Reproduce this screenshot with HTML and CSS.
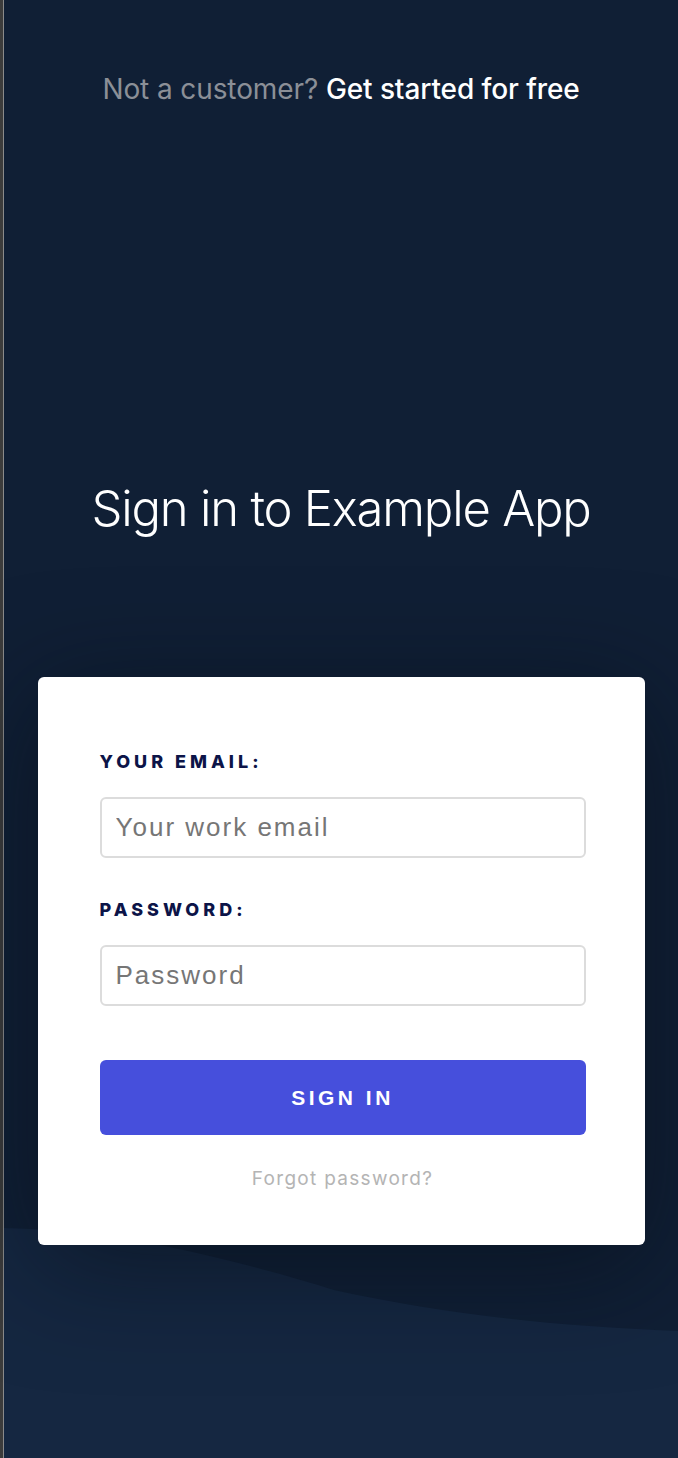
FILE: index.html
```html
<!DOCTYPE html>
<html lang="en">
<head>
<meta charset="utf-8">
<title>Sign in to Example App</title>
<link rel="stylesheet" href="styles.css">
</head>
<body>
<div class="frame">
  <main class="page">
    <p class="signup"><span class="signup-muted">Not a customer?</span> <a class="signup-link" href="#">Get started for free</a></p>
    <h1 class="title">Sign in to Example App</h1>
    <form class="card">
      <label class="field-label" for="email">Your email:</label>
      <input class="field-input" id="email" type="email" placeholder="Your work email">
      <label class="field-label field-label--second" for="password">Password:</label>
      <input class="field-input" id="password" type="password" placeholder="Password">
      <button class="submit" type="button">Sign in</button>
      <a class="forgot" href="#">Forgot password?</a>
    </form>
  </main>
</div>
</body>
</html>
```

FILE: styles.css
```css
html, body {
  margin: 0;
  padding: 0;
}

body {
  background: #101f35;
  font-family: Inter, "Liberation Sans", sans-serif;
}

.frame {
  display: flex;
  min-height: 1458px;
  border-left: 3px solid #3c3c3c;
}

.page {
  flex: 1;
  display: flex;
  flex-direction: column;
  align-items: center;
  padding-top: 71px;
  border-left: 1px solid #8a8a8a;
  background-color: #101f35;
  background-image: url("data:image/svg+xml;utf8,<svg xmlns='http://www.w3.org/2000/svg' viewBox='0 0 674 1458' preserveAspectRatio='none'><path d='M0 1228 C100 1230 200 1250 330 1290 C430 1312 540 1326 674 1331 L674 1458 L0 1458 Z' fill='%23152741'/></svg>");
  background-size: 100% 100%;
  background-repeat: no-repeat;
}

.signup {
  margin: 0;
  font-size: 28px;
  line-height: 36px;
  letter-spacing: -0.1px;
}

.signup-muted {
  color: #8b8f97;
}

.signup-link {
  color: #ffffff;
  text-decoration: none;
  font-weight: 500;
}

.title {
  margin: 372px 0 0;
  font-size: 49px;
  line-height: 60px;
  font-weight: 300;
  color: #ffffff;
  letter-spacing: -1.2px;
}

.card {
  margin-top: 138px;
  width: 607px;
  box-sizing: border-box;
  padding: 75px 59px 54px 62px;
  background: #ffffff;
  border-radius: 6px;
  box-shadow: 0 20px 110px rgba(6, 12, 22, 0.55);
  display: flex;
  flex-direction: column;
}

.field-label {
  font-family: Inter, "Liberation Sans", sans-serif;
  font-size: 18px;
  line-height: 20px;
  font-weight: 800;
  letter-spacing: 4px;
  text-transform: uppercase;
  color: #0c1448;
}

.field-label--second {
  margin-top: 42px;
}

.field-input {
  margin-top: 25px;
  height: 61px;
  box-sizing: border-box;
  padding: 0 14px;
  border: 2px solid #dcdcdc;
  border-radius: 6px;
  font-family: "Liberation Sans", Arial, sans-serif;
  font-size: 26px;
  letter-spacing: 2px;
  color: #333333;
  outline: none;
}

.field-input::placeholder {
  color: #767676;
}

.submit {
  margin-top: 54px;
  height: 75px;
  border: none;
  border-radius: 6px;
  background: #464fdc;
  color: #ffffff;
  font-family: "Liberation Sans", Arial, sans-serif;
  font-size: 21px;
  font-weight: 700;
  letter-spacing: 3.5px;
  text-transform: uppercase;
}

.forgot {
  margin-top: 32px;
  align-self: center;
  font-family: Inter, "Liberation Sans", sans-serif;
  font-size: 19px;
  line-height: 24px;
  letter-spacing: 1.3px;
  color: #b4b4b4;
  text-decoration: none;
}
```
